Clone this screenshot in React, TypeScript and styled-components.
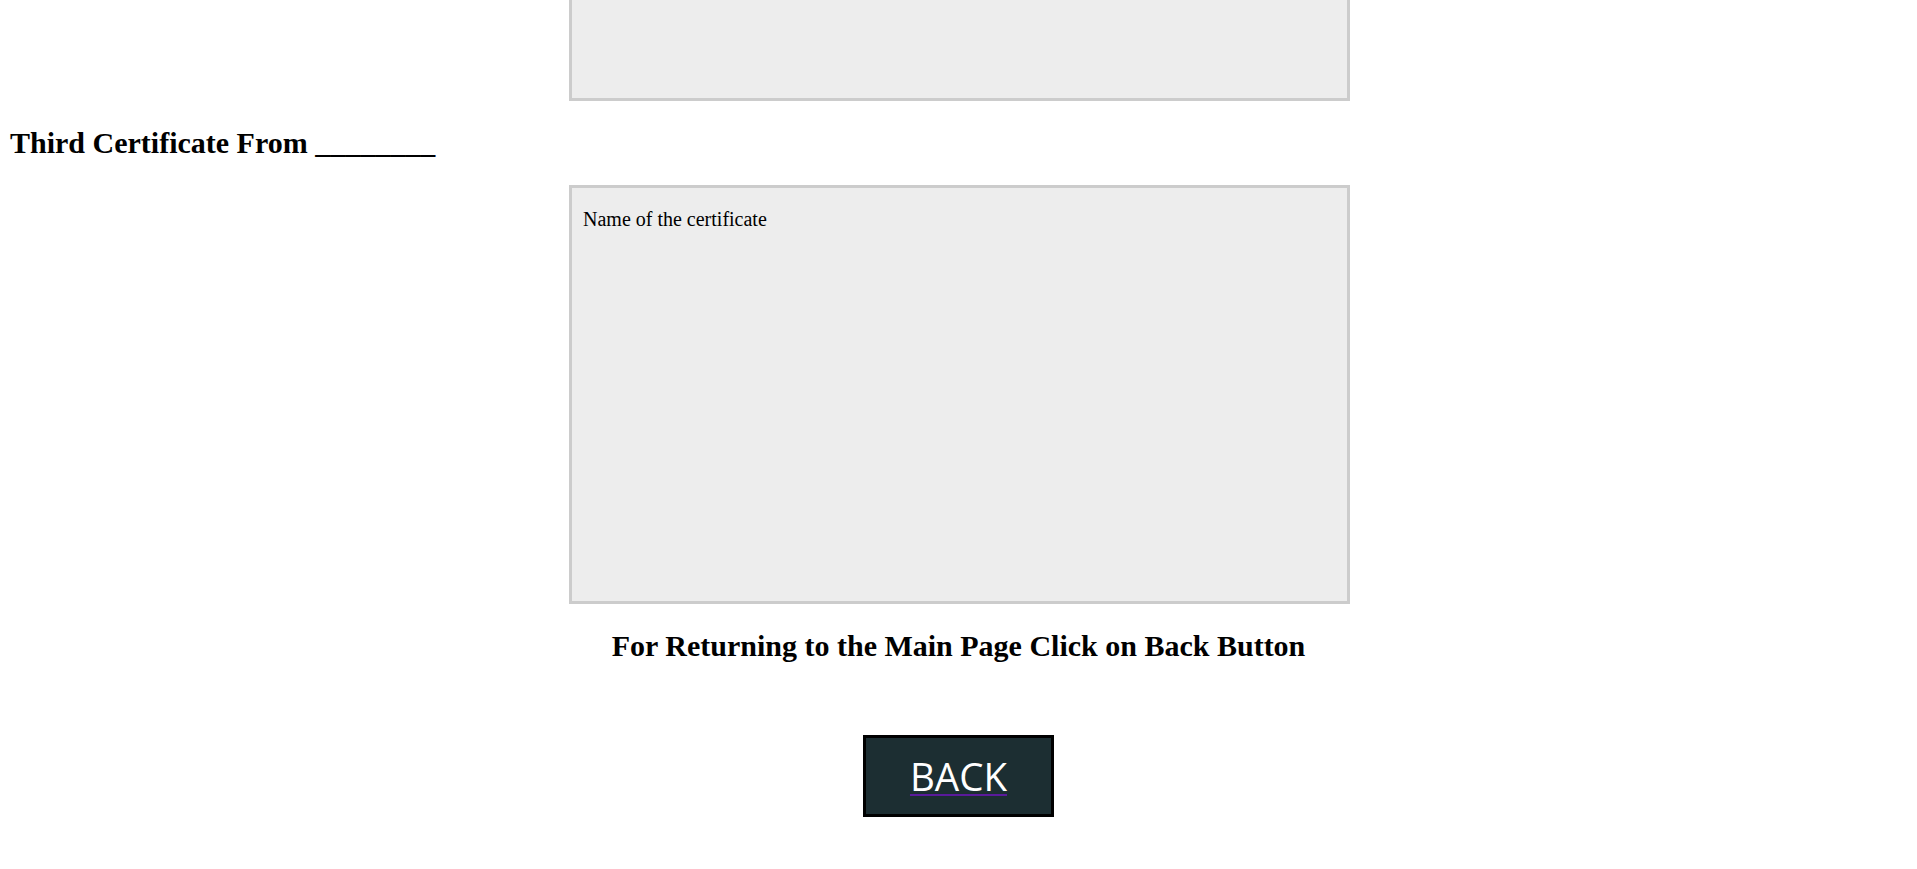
import React from "react";
import styled, { createGlobalStyle } from "styled-components";

const GlobalStyle = createGlobalStyle`
  html, body {
    margin: 0;
    padding: 0;
    background: #ffffff;
    overflow: hidden;
  }
  body {
    font-family: "Liberation Serif", "Times New Roman", serif;
    color: #000000;
  }
`;

const Page = styled.main`
  padding: 0 10px;
`;

const CertificatePanel = styled.div<{ $scrolledPast?: boolean }>`
  box-sizing: border-box;
  width: 781px;
  height: 419px;
  margin-top: ${(p) => (p.$scrolledPast ? "-318px" : "0")};
  margin-left: calc(50% - 389.5px);
  margin-right: auto;
  border: 3px solid #cccccc;
  background: #ededed;
  padding: 20px 11px;
  font-size: 20px;
  line-height: normal;
`;

const SectionTitle = styled.h2<{ $center?: boolean }>`
  margin: 25px 0;
  font-size: 30px;
  font-weight: bold;
  line-height: normal;
  text-align: ${(p) => (p.$center ? "center" : "left")};
`;

const ButtonRow = styled.div`
  margin-top: 72px;
  display: flex;
  justify-content: center;
`;

const BackButton = styled.button`
  box-sizing: border-box;
  background: #1c2e32;
  border: 3px solid #000000;
  padding: 12px 44px;
  margin: 0;
  cursor: pointer;
  font-family: "Open Sans", "Segoe UI", sans-serif;
  font-size: 38.5px;
  font-weight: 500;
  line-height: normal;
`;

const BackLink = styled.a`
  color: #5a1a9b;
  text-decoration: underline;
  text-decoration-thickness: 2px;
  text-underline-offset: 3px;
  text-decoration-skip-ink: none;
`;

const BackLabel = styled.span`
  color: #ffffff;
`;

export default function App() {
  return (
    <>
      <GlobalStyle />
      <Page>
        <CertificatePanel $scrolledPast />
        <SectionTitle>Third Certificate From ________</SectionTitle>
        <CertificatePanel>Name of the certificate</CertificatePanel>
        <SectionTitle $center>For Returning to the Main Page Click on Back Button</SectionTitle>
        <ButtonRow>
          <BackButton type="button">
            <BackLink href="#main">
              <BackLabel>BACK</BackLabel>
            </BackLink>
          </BackButton>
        </ButtonRow>
      </Page>
    </>
  );
}
